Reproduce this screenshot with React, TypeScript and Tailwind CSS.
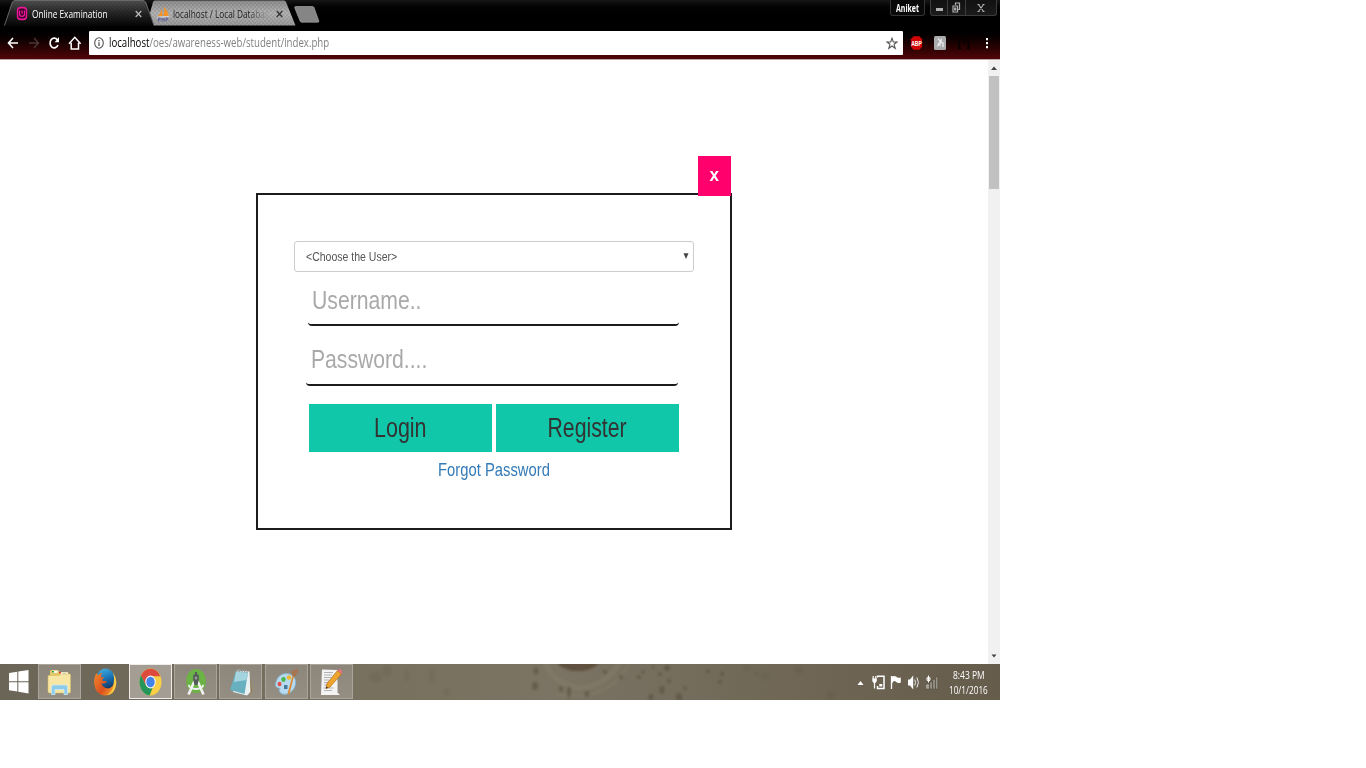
import { useLayoutEffect, useRef, useState } from "react";
import type { ReactNode } from "react";

/** Single line of text condensed horizontally to a given width. */
function Fit({ w, className = "", children }: { w: number; className?: string; children: ReactNode }) {
  const ref = useRef<HTMLSpanElement>(null);
  const [scale, setScale] = useState(1);
  useLayoutEffect(() => {
    if (ref.current) setScale(w / ref.current.offsetWidth);
  }, [w]);
  return (
    <span className={`block shrink-0 ${className}`} style={{ width: w }}>
      <span ref={ref} className="inline-block origin-left whitespace-nowrap" style={{ transform: `scaleX(${scale})` }}>
        {children}
      </span>
    </span>
  );
}

const UI = "font-['Open_Sans','Noto_Sans',sans-serif]";

function TabStrip() {
  return (
    <div className="relative flex h-[27px] shrink-0 items-start bg-linear-to-b from-[#171717] via-[#020202] via-30% to-black">
      <svg className="absolute top-0 left-0" width="330" height="27" viewBox="0 0 330 27">
        <defs>
          <linearGradient id="active" x1="0" y1="0" x2="0" y2="1">
            <stop offset="0" stopColor="#505050" />
            <stop offset=".45" stopColor="#282828" />
            <stop offset="1" stopColor="#050505" />
          </linearGradient>
          <linearGradient id="idle" x1="0" y1="0" x2="0" y2="1">
            <stop offset="0" stopColor="#8b8b8b" />
            <stop offset=".5" stopColor="#b2b2b2" />
            <stop offset="1" stopColor="#9a9a9a" />
          </linearGradient>
          <pattern id="weave" width="4" height="4" patternUnits="userSpaceOnUse">
            <path d="M0 0h2v2H0zM2 2h2v2H2z" fill="#000" opacity=".08" />
          </pattern>
        </defs>
        <path d="M154 25.5 150 13 153 2q.5-1.500 2-1.500H284q1.500 0 2 1.500L295.500 25.500z" fill="url(#idle)" />
        <path d="M154 25.5 150 13 153 2q.5-1.500 2-1.500H284q1.500 0 2 1.500L295.500 25.500z" fill="url(#weave)" />
        <path d="M4 26 12 3q1-2.500 3-2.500H143q2 0 3 2.500L154 26z" fill="url(#active)" />
        <path d="M4 26 12 3q1-2.500 3-2.500H143q2 0 3 2.500L154 26z" fill="url(#weave)" />
        <path d="M4.500 25.500 12 3q1-2.500 3-2.500H143q2 0 3 2.500L154 25.500" fill="none" stroke="#777" strokeWidth=".8" />
        <path d="M295.500 6.500h17q1 0 1.500 1l4.800 13.500q.3 1.200-1 1.200h-16q-1.200 0-1.700-1.200L294.800 8q-.3-1.500.7-1.500z" fill="#858585" stroke="#b0b0b0" strokeWidth=".6" />
      </svg>
      <div className="relative flex h-[27px] w-[150px] items-center pl-[16px]">
        <svg width="12" height="15" viewBox="0 0 12 15">
          <rect x=".8" y=".8" width="10.400" height="13.400" rx="4" fill="#f0159a" />
          <rect x="2.200" y="2.500" width="7.600" height="10" rx="2.500" fill="#3a0628" />
          <path d="M3.500 4.500v3.500q0 2.300 2.500 2.300T8.500 8V4.500M6 4.500v3" fill="none" stroke="#f0159a" strokeWidth="1.300" />
        </svg>
        <Fit w={75.500} className={`${UI} ml-[4px] -translate-y-[0.500px] text-[10.500px] leading-[14px] font-medium text-white`}>Online Examination</Fit>
        <svg className="ml-[27px]" width="7" height="8" viewBox="0 0 7 8">
          <path d="M.7 1 6.300 7M6.300 1 .7 7" stroke="#bbb" strokeWidth="1.200" />
        </svg>
      </div>
      <div className="relative flex h-[27px] w-[145px] items-center pl-[7px]">
        <svg width="13" height="16" viewBox="0 0 13 16">
          <path d="M.8 10.300Q4 7 4.300 3 5.800 6.500 5.300 10zM6.300 10Q8 6 6.800.5 10.500 4 11.800 10z" fill="#f49325" />
          <path d="M0 11.300q6-1 12.500-.5" stroke="#ddd" fill="none" />
          <path d="M1.500 15.500v-3.500H3q1 .8 0 1.800H1.500M5 12v3.500M5 13.800h2M7.200 12v3.500M9 15.500V12h1.500q1 .8 0 1.800H9" fill="none" stroke="#61649a" strokeWidth="1" />
        </svg>
        <Fit w={96} className={`${UI} ml-[3px] text-[10.500px] leading-[14px] text-[#1a1a1a]`}>
          localhost / Local Dat<span className="text-[#444]">a</span><span className="text-[#666]">b</span><span className="text-[#808080]">a</span><span className="text-[#959595]">s</span>
        </Fit>
        <svg className="ml-[7px]" width="7" height="8" viewBox="0 0 7 8">
          <path d="M.7 1 6.300 7M6.300 1 .7 7" stroke="#333" strokeWidth="1.300" />
        </svg>
      </div>
      <div className="relative ml-auto flex">
        <div className="mr-[5px] flex h-[16px] w-[35px] justify-center rounded-b-[3px] border border-t-0 border-[#333] bg-[#090909]">
          <Fit w={23} className={`${UI} text-[10px] leading-[16px] font-bold text-white`}>Aniket</Fit>
        </div>
        <div className="mr-[3px] flex h-[16px] w-[67px] divide-x divide-[#3c3c3c] rounded-b-[3px] border border-t-0 border-[#3c3c3c] bg-linear-to-b from-[#111] to-[#1b1b1b]">
          <div className="flex w-[17px] items-center justify-center">
            <span className="mt-[3px] block h-[3px] w-[7px] bg-[#b0b0b0]" />
          </div>
          <div className="flex w-[18px] items-center justify-center">
            <svg width="9" height="11" viewBox="0 0 9 11">
              <path d="M3.500 3V1h4v6.500H6M1 4h4.500v6H1zM2.700 6h1v2h-1z" fill="none" stroke="#b0b0b0" strokeWidth="1.200" />
            </svg>
          </div>
          <div className="flex flex-1 items-center justify-center">
            <svg width="8" height="8" viewBox="0 0 8 8">
              <path d="M1.500.5l5 7M6.500.5l-5 7M.5.5h2M5.500.5h2M.5 7.500h2M5.500 7.500h2" stroke="#b5b5b5" strokeWidth="1.100" />
            </svg>
          </div>
        </div>
      </div>
    </div>
  );
}

function Toolbar() {
  return (
    <div className="flex h-[33px] shrink-0 items-start border-b border-[#b8a4a4] bg-linear-to-b from-black to-[#520609] pt-[4px]">
      <svg width="89" height="24" viewBox="0 0 89 24" fill="none">
        <path d="M18 12H9M13 7 8.500 12 13 17" stroke="#fff" strokeWidth="1.600" />
        <path d="M29 12h9M34 7l4.500 5L34 17" stroke="#4a3535" strokeWidth="1.400" />
        <path d="M57.300 8.800A4.100 4.900 0 1 0 57.900 14" stroke="#fff" strokeWidth="1.700" />
        <path d="M59 6v5.300h-4.400z" fill="#fff" />
        <path d="M69 12.700 74.800 6.300l5.800 6.400M71.200 11.700V18h7.300V11.700" stroke="#fff" strokeWidth="1.500" />
      </svg>
      <div className="flex h-[24px] w-[814px] items-center rounded-[1px] bg-white pr-[5px] pl-[5px]">
        <svg width="10" height="12" viewBox="0 0 10 12">
          <ellipse cx="5" cy="6" rx="4.300" ry="5.200" fill="none" stroke="#555" strokeWidth="1.100" />
          <path d="M5 5.300V9M5 3v1.300" stroke="#555" strokeWidth="1.300" />
        </svg>
        <Fit w={220.500} className={`${UI} ml-[5px] text-[12px] leading-[18px] text-[#808080]`}>
          <span className="text-black">localhost</span>/oes/awareness-web/student/index.php
        </Fit>
        <svg className="ml-auto" width="12" height="13" viewBox="0 0 12 13">
          <path d="M6 1.300 7.300 5H11L8.100 7.300 9.200 11.300 6 9 2.800 11.300 3.900 7.300 1 5h3.700z" fill="none" stroke="#555" strokeWidth="1.100" />
        </svg>
      </div>
      <svg width="97" height="24" viewBox="0 0 97 24">
        <path d="M10.500 5.300h6l2.600 3v7.500l-2.600 3h-6l-2.600-3V8.300z" fill="#d00505" />
        <text x="8.200" y="15" fontSize="8" fontWeight="700" fontFamily="Liberation Sans, sans-serif" fill="#fff" textLength="10.700" lengthAdjust="spacingAndGlyphs">ABP</text>
        <rect x="31" y="5" width="12" height="14" rx="1.500" fill="#a9abad" />
        <path d="M35 7.500l2 2.500v5M38.500 8l-1 3 2.500 1v4M36 12l-1.500 3.500" fill="none" stroke="#f2f2f2" strokeWidth="1.200" />
        <path d="M57.800 17.300H56Q54.500 7 60.500 6.700T65.500 17.300h-1.800M60.500 12.500l2.700-3" fill="none" stroke="#080000" strokeWidth="1.800" />
        <path d="M83 7h2v2.200h-2zM83 11h2v2.200h-2zM83 15h2v2.200h-2z" fill="#fff" />
      </svg>
    </div>
  );
}

function LoginModal() {
  return (
    <div className="relative mt-[133px] ml-[256px] h-[337px] w-[476px] border-2 border-[#1c1c1e] px-[36px] pt-[46px] font-['Liberation_Sans',Arial,sans-serif]">
      <div className="absolute -top-[39px] right-[-1px] flex h-[40px] w-[33px] items-center justify-center bg-[#ff006c] text-white">
        <Fit w={9.500} className="-translate-x-[0.500px] -translate-y-px text-[18px] leading-[20px] font-bold">x</Fit>
      </div>
      <div className="flex h-[31px] w-[400px] items-center rounded-[3px] border border-[#ccc] pr-[4px] pl-[11px] text-[#555]">
        <Fit w={91.500} className="text-[12.750px] leading-[16px]">&lt;Choose the User&gt;</Fit>
        <svg className="ml-auto" width="6" height="7" viewBox="0 0 6 7">
          <path d="M.5.300h5L3 6z" fill="#444" />
        </svg>
      </div>
      <div className="mt-[4px] ml-[14px] flex h-[50px] w-[371px] items-center rounded-[4px] border-b-2 border-[#1c1c1e] pl-[4px] text-[#a9a9a9]">
        <Fit w={109.500} className="text-[26.700px] leading-[30px]">Username..</Fit>
      </div>
      <div className="mt-[9px] ml-[12px] flex h-[51px] w-[372px] items-center rounded-[4px] border-b-2 border-[#1c1c1e] pb-px pl-[4.500px] text-[#a9a9a9]">
        <Fit w={116.500} className="text-[26.700px] leading-[30px]">Password....</Fit>
      </div>
      <div className="mt-[18px] ml-[15px] flex gap-[4px] text-[27px] leading-[48px] text-[#333]">
        <button className="flex h-[48px] w-[183px] justify-center bg-[#10c8a9]"><Fit w={52.500}>Login</Fit></button>
        <button className="flex h-[48px] w-[183px] justify-center bg-[#10c8a9]"><Fit w={79.500} className="-translate-x-[0.500px]">Register</Fit></button>
      </div>
      <div className="mt-[6px] flex justify-center text-[#337ab7]">
        <Fit w={111.500} className="text-[18.200px] leading-[24px]">Forgot Password</Fit>
      </div>
    </div>
  );
}

function Scrollbar() {
  return (
    <div className="ml-auto flex w-[12px] flex-col items-center bg-[#f1f1f1]">
      <svg width="12" height="16" viewBox="0 0 12 16"><path d="M3 10 6 6.500 9 10z" fill="#444" /></svg>
      <div className="h-[113px] w-[10px] bg-[#c1c1c1]" />
      <svg className="mt-auto" width="12" height="16" viewBox="0 0 12 16"><path d="M3.500 6.500h5L6 9.500z" fill="#444" /></svg>
    </div>
  );
}

function FolderIcon() {
  return (
    <svg width="25" height="28" viewBox="0 0 25 28">
      <path d="M3 3.500q0-1.500 1.500-1.500H11l1.500 2H20q1.500 0 1.500 1.500V24H3z" fill="#e6c766" />
      <path d="M5 2.800h5.500v2H5zM13 4.500h8v2.500h-8z" fill="#fff" />
      <path d="M5 3h2v1.500H5z" fill="#1ba64a" />
      <path d="M12 4h2v1.500h-2z" fill="#d9402c" /><path d="M16 5.500h2.500V7H16z" fill="#3da8e0" />
      <path d="M1 7.500h11L14 6h8.500q1 0 1 1V24q0 1-1 1H2.500Q1 25 1 23.500z" fill="#f8e7a4" stroke="#d9ba63" strokeWidth=".6" />
      <path d="M4.500 26.500V19q0-2 2-2h12q2 0 2 2v7.500h-3.500V21.500H8v5z" fill="#8dcbe8" stroke="#c6e9f7" strokeWidth=".8" />
    </svg>
  );
}

function FirefoxIcon() {
  return (
    <svg width="24" height="28" viewBox="0 0 24 28">
      <defs>
        <linearGradient id="globe" x1="0" y1="0" x2=".3" y2="1">
          <stop offset="0" stopColor="#4bb6e6" /><stop offset=".5" stopColor="#1c77b8" /><stop offset="1" stopColor="#122f5c" />
        </linearGradient>
        <linearGradient id="fox" x1="0" y1="0" x2="1" y2=".6">
          <stop offset="0" stopColor="#ef8a2c" /><stop offset=".6" stopColor="#dd4f1e" /><stop offset="1" stopColor="#f2992b" />
        </linearGradient>
      </defs>
      <ellipse cx="12.500" cy="12.500" rx="9.500" ry="12" fill="url(#globe)" />
      <path d="M3.500 5Q.5 10 1.200 16 2.500 27 12.500 27.500 21.500 27 23 17q.5-5-1.500-8 .3 6-2 9-3 3.500-6.500 2-4-1.500-4.500-5 1.500 1 3.500.3 2-1 1.500-2.300H10q-1-.5-.5-2l2-1.800Q9.500 8.500 8 9.500 7.500 7 9.500 5 7 5 5.500 7 4 7 3.500 5z" fill="url(#fox)" />
      <path d="M20 4.500q4.300 6 3 12.500-1.500 9-9 10.300Q21 22 20.800 14 21.500 9 20 4.500z" fill="#f8cb47" />
    </svg>
  );
}

function ChromeIcon() {
  return (
    <svg width="23" height="28" viewBox="0 0 48 48" preserveAspectRatio="none">
      <circle cx="24" cy="24" r="23" fill="#f9cf45" />
      <path d="M4 12.500A23 23 0 0 1 44.500 14H24L14 29.500z" fill="#dc4b3e" />
      <path d="M4 12.500 14.500 30q5 6 14 4L22 47A23 23 0 0 1 4 12.500z" fill="#24965a" />
      <circle cx="24" cy="24" r="11" fill="#f4f4f4" />
      <circle cx="24" cy="24" r="8.800" fill="#4483e8" />
    </svg>
  );
}

function StudioIcon() {
  return (
    <svg width="22" height="28" viewBox="0 0 22 28">
      <ellipse cx="11" cy="13" rx="10" ry="12" fill="#6ab344" />
      <path d="M9.500 13 3.500 26.500M12.500 13l6 13.500" stroke="#f2f2f2" strokeWidth="2.600" />
      <path d="M3.500 17q2 4 7.500 4t7.500-4" fill="none" stroke="#eee" strokeWidth="1.800" />
      <path d="M8.200 8q0-1.800 1.800-1.800V4h2v2.200q1.800 0 1.800 1.800v4L12.500 17h-3L8.200 12z" fill="#555b59" />
      <ellipse cx="11" cy="10" rx="1.300" ry="1.500" fill="#9b9fa0" />
    </svg>
  );
}

function NotepadIcon() {
  return (
    <svg width="24" height="28" viewBox="0 0 24 28">
      <path d="M20 4l3 20-3 2z" fill="#947445" />
      <path d="M8 2.500 20.500 3.500 21.500 24 18 27.500 4 24z" fill="#e9f1f2" />
      <path d="M7 3 19 4.500 15.500 26 1 22z" fill="#68afc0" />
      <path d="M7 3 19 4.500 17.500 12 5 14z" fill="#a4d4dd" />
      <path d="M8 1v3M10.500 1v3M13 1.500v3M15.500 1.500v3M18 2v3" stroke="#9a9a9a" />
    </svg>
  );
}

function PaintIcon() {
  return (
    <svg width="25" height="28" viewBox="0 0 25 28">
      <path d="M2 14Q4 6 12 5.500q8 0 9.500 7 1 8-6 12.500-6 3-9.500-.5-1.500-2 0-4Q3 20 1.500 18 1 16 2 14z" fill="#b7daee" stroke="#85b4d2" />
      <ellipse cx="5.500" cy="16" rx="2" ry="2.200" fill="#e25148" />
      <ellipse cx="9.500" cy="11.500" rx="2.200" ry="2.400" fill="#4db64e" />
      <ellipse cx="15" cy="9.500" rx="2.200" ry="2.200" fill="#efb52d" />
      <path d="M10 17h3.500v4H10z" fill="#47799c" />
      <path d="M20 8 15.500 26l-2 .5.500-2.500L18.500 7.500z" fill="#dd8a38" />
      <path d="M18 7.500l-.5-4L23.500.5l.5 3.500-3.500 5z" fill="#a5754d" />
    </svg>
  );
}

function EditorIcon() {
  return (
    <svg width="24" height="28" viewBox="0 0 24 28">
      <path d="M3 1.500 18.500 2v22.500l2.500 2.500H2z" fill="#f3f3f3" />
      <path d="M5 4.500h9M5 7h8M5 9.500h7M5 12h5M5 14.500h4M5 17h4M4.500 20h10M5 22.500h8" stroke="#aaa" strokeWidth=".9" />
      <path d="M18.500 2.500 22.500 6 11 19l-4 1.500 1-5z" fill="#efa52b" stroke="#a86c18" strokeWidth=".7" />
      <path d="M18.500 2.500q1.500-2 4-.5 1.500 2 0 4z" fill="#e4717b" />
      <path d="M7.300 18.500 7 20.500l2-.7z" fill="#222" />
    </svg>
  );
}

function TaskButton({ active = false, children }: { active?: boolean; children: ReactNode }) {
  return (
    <div className={`flex h-[35px] w-[43px] shrink-0 items-center justify-center border ${active ? "border-[#eeedea] bg-[#a39d93]" : "border-[#aaa59c] bg-linear-to-b from-[#8d867b] to-[#958e82]"}`}>
      {children}
    </div>
  );
}

const DROPS = [
  [376, 13, 7, 6], [387, 7, 5, 6], [407, 12, 3, 5], [432, 12, 3, 6], [447, 28, 3, 4], [536, 7, 2.5, 3.5],
  [535, 22, 3, 4], [561, 25, 2, 3], [569, 28, 2, 6], [587, 30, 2.5, 3], [605, 8, 2, 2], [621, 13, 2, 2.5],
  [639, 13, 2, 2], [643, 8, 1.5, 2], [653, 3, 1, 2], [660, 10, 2, 2], [662, 26, 2.5, 4], [651, 33, 2.5, 3],
  [667, 4, 3, 3], [669, 17, 2, 2], [685, 24, 1.500, 2], [708, 7, 2, 2], [722, 10, 2, 2], [720, 18, 2, 2],
  [679, 33, 3, 4], [747, 4, 3, 4], [765, 12, 3.500, 4], [757, 9, 2, 2], [799, 6, 4, 3], [831, 31, 4, 4],
];

function Taskbar() {
  return (
    <div className="relative flex h-[36px] shrink-0 items-start bg-[#746b5b]">
      <svg className="absolute inset-0" width="1000" height="36" viewBox="0 0 1000 36">
        <defs>
          <linearGradient id="bar" x1="0" x2="1" y1="0" y2="0">
            <stop offset="0" stopColor="#6b6558" /><stop offset=".36" stopColor="#79715f" />
            <stop offset=".55" stopColor="#7b7363" /><stop offset=".62" stopColor="#777060" />
            <stop offset=".8" stopColor="#6f6655" /><stop offset="1" stopColor="#655c4c" />
          </linearGradient>
          <filter id="soft" x="-30%" y="-30%" width="160%" height="160%"><feGaussianBlur stdDeviation="1.200" /></filter>
        </defs>
        <rect width="1000" height="36" fill="url(#bar)" />
        <g filter="url(#soft)">
          <path d="M545-2q8 22 34 26 28-2 41-26" fill="none" stroke="#857c6b" strokeWidth="6" opacity=".5" />
          <path d="M555 31q55 7 74-31" fill="none" stroke="#857c6b" strokeWidth="3" opacity=".4" />
          <ellipse cx="578" cy="-4" rx="21" ry="11" fill="#5f513c" />
        </g>
        <g filter="url(#soft)" fill="#4c4334" opacity=".5">
          {DROPS.map(([x, y, rx, ry], i) => (
            <ellipse key={i} cx={x} cy={y} rx={rx} ry={ry} opacity={x < 460 || x > 740 ? 0.25 : 0.85} />
          ))}
        </g>
      </svg>
      <div className="relative flex h-[36px] w-[38px] items-center pl-[9px]">
        <svg width="20" height="26" viewBox="0 0 20 26">
          <path d="M0 4 8.300 2.800V12.300H0zM9.300 2.600 19.500 1v11.300H9.300zM0 13.300h8.300v9.200L0 21.300zM9.300 13.300h10.200V24.500L9.300 22.700z" fill="#fff" />
        </svg>
      </div>
      <div className="relative flex">
        <TaskButton><FolderIcon /></TaskButton>
        <div className="flex h-[35px] w-[48px] items-center justify-center"><FirefoxIcon /></div>
        <TaskButton active><ChromeIcon /></TaskButton>
        <div className="ml-[2px] flex gap-[2.300px]">
          <TaskButton><StudioIcon /></TaskButton>
          <TaskButton><NotepadIcon /></TaskButton>
          <TaskButton><PaintIcon /></TaskButton>
          <TaskButton><EditorIcon /></TaskButton>
        </div>
      </div>
      <div className="relative ml-auto flex">
        <svg width="92" height="36" viewBox="0.5 0 92 36" fill="none">
          <path d="M9 21 12 17l3 4z" fill="#fff" />
          <path d="M29 13.500V12.300h6.500v12.200H29v-2.500" stroke="#fff" strokeWidth="1.500" />
          <path d="M24.700 12v3M27.300 12v3M26 18v6.500" stroke="#fff" strokeWidth="1.200" />
          <path d="M23.800 14.500h4.500v2.500l-1.300 2h-2l-1.200-2zM30.800 20h3v2.500h-3z" fill="#fff" />
          <path d="M43 12v13" stroke="#fff" strokeWidth="1.300" />
          <path d="M43.500 12.500q2-1 4 0 1.500 2 4.800 1v5q-2.800 1.500-4.800-.7T43.500 19.500z" fill="#fff" />
          <path d="M59.500 15.500h2l3.200-4v14l-3.200-4h-2z" fill="#fff" />
          <path d="M66.200 15.500q1.800 3 0 6M68.400 13.500q3 5 0 10" stroke="#eee" strokeWidth="1" />
          <path d="M77 20h4v5h-4zM81.500 18h2.200v7h-2.200zM84.500 15.500h2V25h-2zM87.200 13h2v12h-2z" fill="#a5a196" stroke="#4a453b" strokeWidth=".5" />
          <path d="M80 11.500v7M77.500 15h5M78.500 13l3 4M81.500 13l-3 4" stroke="#fff" strokeWidth="1" />
        </svg>
        <div className={`${UI} mr-[12px] ml-[8px] flex w-[39px] flex-col items-center pt-[4px] text-[10.500px] leading-[15px] text-white`}>
          <Fit w={31.500}>8:43 PM</Fit>
          <Fit w={39}>10/1/2016</Fit>
        </div>
      </div>
    </div>
  );
}

export default function App() {
  return (
    <div className="h-[768px] w-[1366px] overflow-hidden bg-white">
      <div className="flex h-[700px] w-[1000px] flex-col">
        <TabStrip />
        <Toolbar />
        <main className="flex min-h-0 flex-1 bg-white">
          <LoginModal />
          <Scrollbar />
        </main>
        <Taskbar />
      </div>
    </div>
  );
}
